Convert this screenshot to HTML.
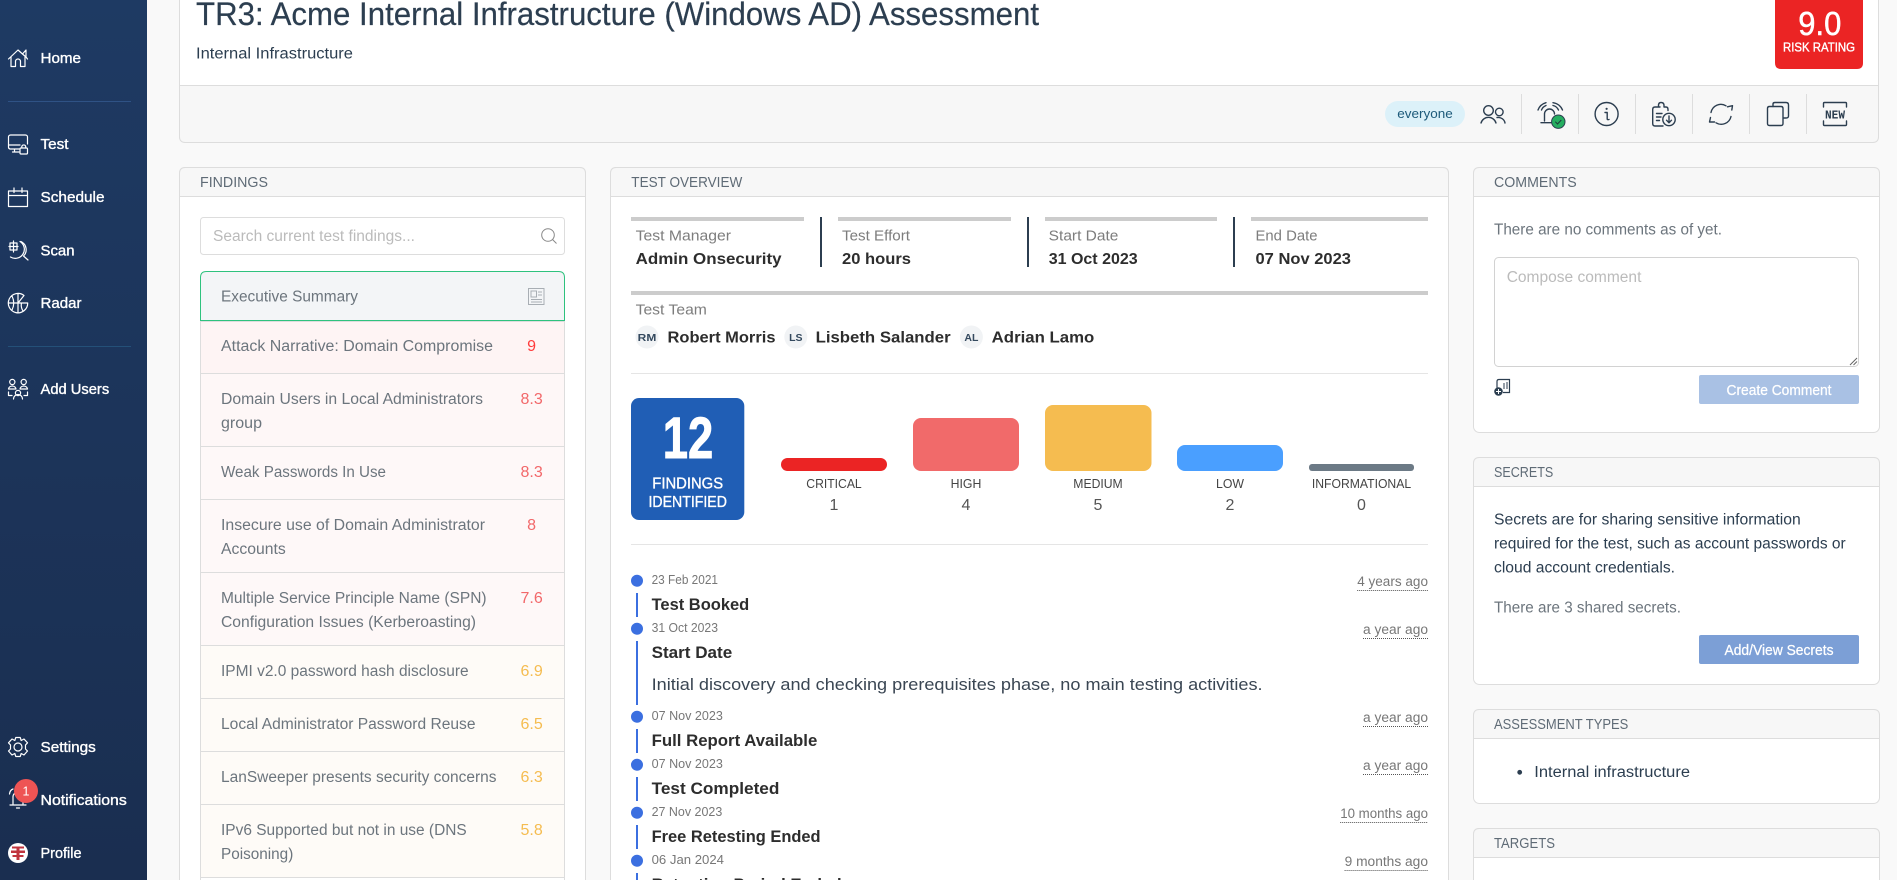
<!DOCTYPE html>
<html lang="en">
<head>
<meta charset="utf-8">
<title>TR3: Acme Internal Infrastructure (Windows AD) Assessment</title>
<style>
html,body{margin:0;padding:0;width:1897px;height:880px;overflow:hidden;background:#f9f9f9}
svg{display:block;font-family:"Liberation Sans",sans-serif;overflow:hidden}
.nav{fill:#fff;font-size:14.5px;stroke:#fff;stroke-width:.35}
.i{fill:none;stroke:#fff;stroke-width:1.2;stroke-linecap:round;stroke-linejoin:round}
.k{fill:none;stroke:#2c3e50;stroke-width:1.4;stroke-linecap:round;stroke-linejoin:round}
.h{fill:#5f6b76;font-size:14.5px}
.f{fill:#6c757d;font-size:15.5px}
.s{font-size:16px;text-anchor:middle}
.r1{fill:#ff3b3b}.r2{fill:#f2686a}.o{fill:#f5bc50}
.lab{fill:#7d7d7d;font-size:14.5px}
.val{fill:#2d2d2d;font-size:16px;font-weight:700}
.nm{fill:#2d2d2d;font-size:16px;font-weight:700}
.av{fill:#34495e;font-size:10.5px;text-anchor:middle;font-weight:700}
.bl{fill:#444;font-size:13px;text-anchor:middle}
.bc{fill:#555;font-size:16px;text-anchor:middle}
.d{fill:#777;font-size:13px}
.t{fill:#2d2d2d;font-size:16.5px;font-weight:700}
.a{fill:#777;font-size:13.5px;text-anchor:end}
.u{stroke:#555;stroke-width:1;stroke-dasharray:1 1}
.dot{fill:#3b6fe0}
.v{fill:#3b6fe0}
.b{fill:#2c3e50;font-size:15.5px}
.g{fill:#6c757d;font-size:15.5px}
.bt{fill:#fff;font-size:14.5px;text-anchor:middle;stroke:#fff;stroke-width:.25}
</style>
</head>
<body>
<svg width="1897" height="880" viewBox="0 0 1897 880" xmlns="http://www.w3.org/2000/svg">
<defs>
<linearGradient id="sb" x1="0" y1="0" x2="0" y2="1"><stop offset="0" stop-color="#1e3a63"/><stop offset="1" stop-color="#1a2e50"/></linearGradient>
</defs>
<rect width="1897" height="880" fill="#f9f9f9"/>

<!-- Sidebar -->
<rect width="147" height="880" fill="url(#sb)"/>
<rect x="8" y="101" width="123" height="1" fill="#2f5285"/>
<rect x="8" y="346" width="123" height="1" fill="#245078"/>
<text class="nav" x="40.5" y="63.2" textLength="40.5" lengthAdjust="spacingAndGlyphs">Home</text>
<text class="nav" x="40.5" y="149.2" textLength="28" lengthAdjust="spacingAndGlyphs">Test</text>
<text class="nav" x="40.5" y="202.2" textLength="64" lengthAdjust="spacingAndGlyphs">Schedule</text>
<text class="nav" x="40.5" y="255.4" textLength="34" lengthAdjust="spacingAndGlyphs">Scan</text>
<text class="nav" x="40.5" y="308.2" textLength="41" lengthAdjust="spacingAndGlyphs">Radar</text>
<text class="nav" x="40.5" y="394.2" textLength="68.7" lengthAdjust="spacingAndGlyphs">Add Users</text>
<text class="nav" x="40.5" y="752.2" textLength="55.3" lengthAdjust="spacingAndGlyphs">Settings</text>
<text class="nav" x="40.5" y="805.2" textLength="86.3" lengthAdjust="spacingAndGlyphs">Notifications</text>
<text class="nav" x="40.5" y="858.2" textLength="41" lengthAdjust="spacingAndGlyphs">Profile</text>

<!-- sidebar icons -->
<path class="i" d="M8.5 59 L18 50 L22.5 54 L26 50 V57 L27.5 59 M22.5 54 L26 57 M11 57 V66.5 H15.5 V61.5 A2.5 2.5 0 0 1 20.5 61.5 V66.5 H25 V57"/>
<path class="i" d="M19 149 H10 A2 2 0 0 1 8.5 147 V137 A2 2 0 0 1 10.5 135 H25.5 A2 2 0 0 1 27.5 137 V144 M8.5 145 H20 M14.5 149 V152 M12.5 152 H19"/>
<rect class="i" x="20" y="148" width="7.5" height="6" rx="1"/><path class="i" d="M21.8 148 V146.5 A2 2 0 0 1 25.7 146.5 V148"/>
<path class="i" d="M8.5 191 H27.5 V206.5 H8.5 Z M8.5 195.5 H27.5 M14 188 V192.5 M22 188 V192.5"/>
<path class="i" d="M20 241.5 A9 9 0 1 1 10.5 257 M21 241.5 A9 9 0 0 1 23.5 256 L28 260 M10 243 H17 V250 H10 Z M9 246.5 H18 M13.5 241 V252"/>
<path class="i" d="M24 295.5 A9.7 9.7 0 1 0 27.7 303 H18 L24 295.5 M8.5 303 H18 M18 293.5 V312.5 M12 296 Q15.5 303 12 310 M23 311 Q20.5 307 21.5 303"/>
<circle class="i" cx="12.3" cy="382" r="2.6"/><circle class="i" cx="23.7" cy="382" r="2.6"/>
<path class="i" d="M8.5 389 A3.8 3.5 0 0 1 16 389 Z M20 389 A3.8 3.5 0 0 1 27.5 389 Z M8.5 392 V395.5 H12 M27.5 392 V395.5 H24"/>
<circle class="i" cx="18" cy="393" r="2.6"/><path class="i" d="M13.5 399 A4.5 4.5 0 0 1 22.5 399"/>
<path class="i" d="M15.8 737.5 H20.2 L21.2 740.5 L24 739 L27.5 742.8 L25.5 745 L25.5 749 L27.5 751 L24 755 L21.2 753.5 L20.2 756.5 H15.8 L14.8 753.5 L12 755 L8.5 751 L10.5 749 L10.5 745 L8.5 742.8 L12 739 L14.8 740.5 Z"/>
<circle class="i" cx="18" cy="747" r="4"/>
<path class="i" d="M13 804 V797 A5 5 0 0 1 23 797 V804 M10 805 H26 M16.5 808 H19.5 M9.5 794 Q10 790 13 789"/>
<circle cx="26" cy="791" r="12" fill="#ee5454"/>
<text x="26" y="795.5" fill="#fff" font-size="12.5" text-anchor="middle">1</text>
<circle cx="18" cy="853" r="10" fill="#fff"/>
<path d="M12 846.5 H24 V848.5 H19.5 V850.5 H25 V853 H19.5 V855 H23.5 V857 H19.5 V860 H16.5 V857 H12.5 V855 H16.5 V853 H11 V850.5 H16.5 V848.5 H12 Z" fill="#c0353f"/>

<!-- Header card -->
<rect x="179.5" y="-10" width="1699" height="152.5" rx="6" fill="#fff" stroke="#ddd"/>
<path d="M179.5 85.5 H1878.5 V136.5 Q1878.5 142.5 1872.5 142.5 H185.5 Q179.5 142.5 179.5 136.5 Z" fill="#f7f7f7" stroke="#ddd"/>
<text x="196" y="25" fill="#2c3e50" font-size="32" stroke="#2c3e50" stroke-width=".2" textLength="843" lengthAdjust="spacingAndGlyphs">TR3: Acme Internal Infrastructure (Windows AD) Assessment</text>
<text x="196" y="58.7" fill="#2c3e50" font-size="15.5" textLength="157" lengthAdjust="spacingAndGlyphs">Internal Infrastructure</text>
<path d="M1775 0 H1863 V63 Q1863 69 1857 69 H1781 Q1775 69 1775 63 Z" fill="#eb2424"/>
<text x="1798.3" y="35" fill="#fff" font-size="33" stroke="#fff" stroke-width=".5" textLength="43" lengthAdjust="spacingAndGlyphs">9.0</text>
<text x="1783" y="51.7" fill="#fff" font-size="13" stroke="#fff" stroke-width=".35" textLength="72" lengthAdjust="spacingAndGlyphs">RISK RATING</text>

<!-- toolbar -->
<rect x="1521" y="94" width="1" height="40" fill="#ddd"/><rect x="1578" y="94" width="1" height="40" fill="#ddd"/><rect x="1635" y="94" width="1" height="40" fill="#ddd"/><rect x="1692" y="94" width="1" height="40" fill="#ddd"/><rect x="1749" y="94" width="1" height="40" fill="#ddd"/><rect x="1806" y="94" width="1" height="40" fill="#ddd"/>
<rect x="1385" y="101" width="80" height="26" rx="13" fill="#dcf1f9"/>
<text x="1397.3" y="118" fill="#1d5a7a" font-size="13" textLength="55.5" lengthAdjust="spacingAndGlyphs">everyone</text>
<circle class="k" cx="1488.5" cy="110.5" r="4.8"/><path class="k" d="M1481 123 A7.8 7.8 0 0 1 1496 123"/>
<circle class="k" cx="1499.3" cy="112" r="3.8"/><path class="k" d="M1497 117.5 A7 6.5 0 0 1 1505 123"/>
<path class="k" d="M1544.5 121 V114 A5 5 0 0 1 1554.5 114 M1541 122.7 H1552 M1541.5 110 A8 8 0 0 1 1546 105.5 M1538 110 A12 12 0 0 1 1546 102.7 M1553 105.5 A8 8 0 0 1 1558.5 110 M1553 102.7 A12 12 0 0 1 1562.5 110"/>
<circle cx="1558.3" cy="121.7" r="6.7" fill="#25ae60" stroke="#2c3e50" stroke-width="1"/><path d="M1555.3 121.7 L1557.5 124 L1561.3 120" fill="none" stroke="#1e3a3a" stroke-width="1"/>
<circle class="k" cx="1606.6" cy="114" r="11.5"/><path class="k" d="M1605 112.5 H1607.2 V119 Q1607.2 120 1609 119.5"/><circle cx="1606.6" cy="108.8" r="1.1" fill="#2c3e50"/>
<path class="k" d="M1660 107 H1655 Q1652.7 107 1652.7 109.5 V123.5 Q1652.7 126 1655 126 H1663 M1668 110.5 V109.5 Q1668 107 1666 107 H1664 V105.5 Q1664 102.5 1661 102.5 Q1658.5 102.5 1658.5 105.5 V107 M1656.5 113.5 H1662 M1656.5 117 H1661 M1656.5 120.5 H1659.5"/>
<circle class="k" cx="1669" cy="119.5" r="6.2"/><path class="k" d="M1669 116 V122.5 M1666.5 120.2 L1669 122.8 L1671.5 120.2"/>
<path class="k" d="M1711 112.5 A10 10 0 0 1 1726 105.8 M1731 116.5 A10 10 0 0 1 1716 122.8 M1727.5 106.8 L1732.5 105.7 L1731.8 110 M1714.5 122 L1709.5 122 L1710.5 117.5"/>
<path class="k" d="M1773 106.5 V104 Q1773 102.5 1775 102.5 H1786 Q1788.5 102.5 1788.5 105 V116 Q1788.5 118 1786 118 H1783.5"/>
<path class="k" d="M1769.5 106.5 H1781 Q1783 106.5 1783 108.5 V123.5 Q1783 125.5 1781 125.5 H1769.5 Q1767.5 125.5 1767.5 123.5 V108.5 Q1767.5 106.5 1769.5 106.5 Z"/>
<path class="k" d="M1823.5 107 V103.5 Q1823.5 102.5 1824.5 102.5 H1845.5 Q1846.5 102.5 1846.5 103.5 V107 M1823.5 121 V124.5 Q1823.5 125.5 1824.5 125.5 H1845.5 Q1846.5 125.5 1846.5 124.5 V121"/>
<text x="1825" y="118.5" fill="#2c3e50" font-size="11.5" font-weight="700" style="font-family:'Liberation Mono',monospace" textLength="20" lengthAdjust="spacingAndGlyphs">NEW</text>

<!-- Findings card -->
<path d="M179.5 880 V173.5 Q179.5 167.5 185.5 167.5 H579.5 Q585.5 167.5 585.5 173.5 V880" fill="#fff" stroke="#ddd"/>
<path d="M179.5 196.5 V173.5 Q179.5 167.5 185.5 167.5 H579.5 Q585.5 167.5 585.5 173.5 V196.5 Z" fill="#f7f7f7" stroke="#ddd"/>
<text class="h" x="200" y="187" textLength="68" lengthAdjust="spacingAndGlyphs">FINDINGS</text>
<rect x="200.5" y="217.5" width="364" height="37" rx="3" fill="#fff" stroke="#ddd"/>
<text x="213" y="241" fill="#bbb" font-size="15.5" textLength="202" lengthAdjust="spacingAndGlyphs">Search current test findings...</text>
<circle cx="548" cy="235" r="6.3" fill="none" stroke="#888" stroke-width="1"/><path d="M552.5 239.5 L556.5 243.5" stroke="#888" fill="none"/>

<rect x="200.5" y="321.5" width="364" height="52" fill="#fef4f4" stroke="#ddd"/>
<rect x="200.5" y="373.5" width="364" height="73" fill="#fef7f7" stroke="#ddd"/>
<rect x="200.5" y="446.5" width="364" height="53" fill="#fef8f8" stroke="#ddd"/>
<rect x="200.5" y="499.5" width="364" height="73" fill="#fef8f8" stroke="#ddd"/>
<rect x="200.5" y="572.5" width="364" height="73" fill="#fef8f8" stroke="#ddd"/>
<rect x="200.5" y="645.5" width="364" height="53" fill="#fefbf7" stroke="#ddd"/>
<rect x="200.5" y="698.5" width="364" height="53" fill="#fefbf7" stroke="#ddd"/>
<rect x="200.5" y="751.5" width="364" height="53" fill="#fefbf7" stroke="#ddd"/>
<rect x="200.5" y="804.5" width="364" height="73" fill="#fefbf7" stroke="#ddd"/>
<path d="M200.5 880 V877.5 H564.5 V880" fill="#fff" stroke="#ddd"/>
<path d="M200.5 320.5 V277.5 Q200.5 271.5 206.5 271.5 H558.5 Q564.5 271.5 564.5 277.5 V320.5 Z" fill="#f3f5f7" stroke="#2ec27e"/>
<text class="f" x="221" y="301.7" textLength="137" lengthAdjust="spacingAndGlyphs">Executive Summary</text>
<path d="M528.5 288.5 H544 V304.5 H528.5 Z M531 291 H536.5 V297 H531 Z M538 292 H542 M538 295 H542 M531 299.5 H542 M531 302 H542" fill="none" stroke="#a8aeb4" stroke-width="1"/>
<text class="f" x="221" y="351" textLength="272" lengthAdjust="spacingAndGlyphs">Attack Narrative: Domain Compromise</text><text class="s r1" x="531.6" y="351">9</text>
<text class="f" x="221" y="404" textLength="262" lengthAdjust="spacingAndGlyphs">Domain Users in Local Administrators</text><text class="f" x="221" y="428" textLength="41" lengthAdjust="spacingAndGlyphs">group</text><text class="s r2" x="531.6" y="404">8.3</text>
<text class="f" x="221" y="477" textLength="165" lengthAdjust="spacingAndGlyphs">Weak Passwords In Use</text><text class="s r2" x="531.6" y="477">8.3</text>
<text class="f" x="221" y="530" textLength="264" lengthAdjust="spacingAndGlyphs">Insecure use of Domain Administrator</text><text class="f" x="221" y="554" textLength="64.7" lengthAdjust="spacingAndGlyphs">Accounts</text><text class="s r2" x="531.6" y="530">8</text>
<text class="f" x="221" y="603" textLength="265.6" lengthAdjust="spacingAndGlyphs">Multiple Service Principle Name (SPN)</text><text class="f" x="221" y="627" textLength="255" lengthAdjust="spacingAndGlyphs">Configuration Issues (Kerberoasting)</text><text class="s r2" x="531.6" y="603">7.6</text>
<text class="f" x="221" y="676" textLength="247.6" lengthAdjust="spacingAndGlyphs">IPMI v2.0 password hash disclosure</text><text class="s o" x="531.6" y="676">6.9</text>
<text class="f" x="221" y="729" textLength="254.5" lengthAdjust="spacingAndGlyphs">Local Administrator Password Reuse</text><text class="s o" x="531.6" y="729">6.5</text>
<text class="f" x="221" y="782" textLength="275.5" lengthAdjust="spacingAndGlyphs">LanSweeper presents security concerns</text><text class="s o" x="531.6" y="782">6.3</text>
<text class="f" x="221" y="835" textLength="245.7" lengthAdjust="spacingAndGlyphs">IPv6 Supported but not in use (DNS</text><text class="f" x="221" y="859" textLength="72.3" lengthAdjust="spacingAndGlyphs">Poisoning)</text><text class="s o" x="531.6" y="835">5.8</text>

<!-- Test overview -->
<path d="M610.5 880 V173.5 Q610.5 167.5 616.5 167.5 H1442.5 Q1448.5 167.5 1448.5 173.5 V880" fill="#fff" stroke="#ddd"/>
<path d="M610.5 196.5 V173.5 Q610.5 167.5 616.5 167.5 H1442.5 Q1448.5 167.5 1448.5 173.5 V196.5 Z" fill="#f7f7f7" stroke="#ddd"/>
<text class="h" x="631.3" y="187" textLength="111" lengthAdjust="spacingAndGlyphs">TEST OVERVIEW</text>
<rect x="631" y="217" width="173" height="4" fill="#ccc"/><rect x="838" y="217" width="173" height="4" fill="#ccc"/><rect x="1045" y="217" width="172" height="4" fill="#ccc"/><rect x="1251" y="217" width="177" height="4" fill="#ccc"/>
<rect x="820" y="217" width="2" height="50" fill="#2c3e50"/><rect x="1027" y="217" width="2" height="50" fill="#2c3e50"/><rect x="1233" y="217" width="2" height="50" fill="#2c3e50"/>
<text class="lab" x="635.6" y="240.7" textLength="95.4" lengthAdjust="spacingAndGlyphs">Test Manager</text>
<text class="lab" x="842" y="240.7" textLength="68" lengthAdjust="spacingAndGlyphs">Test Effort</text>
<text class="lab" x="1048.7" y="240.7" textLength="69.7" lengthAdjust="spacingAndGlyphs">Start Date</text>
<text class="lab" x="1255.5" y="240.7" textLength="62" lengthAdjust="spacingAndGlyphs">End Date</text>
<text class="val" x="635.6" y="264" textLength="146" lengthAdjust="spacingAndGlyphs">Admin Onsecurity</text>
<text class="val" x="842" y="264" textLength="69" lengthAdjust="spacingAndGlyphs">20 hours</text>
<text class="val" x="1048.7" y="264" textLength="89" lengthAdjust="spacingAndGlyphs">31 Oct 2023</text>
<text class="val" x="1255.5" y="264" textLength="95.5" lengthAdjust="spacingAndGlyphs">07 Nov 2023</text>
<rect x="631" y="291" width="797" height="4" fill="#ccc"/>
<text class="lab" x="635.6" y="314.7" textLength="71.3" lengthAdjust="spacingAndGlyphs">Test Team</text>
<circle cx="647" cy="337" r="11.5" fill="#f1f3f5"/><text class="av" x="647" y="341" textLength="18.6" lengthAdjust="spacingAndGlyphs">RM</text>
<text class="nm" x="667.5" y="342.3" textLength="108" lengthAdjust="spacingAndGlyphs">Robert Morris</text>
<circle cx="795.8" cy="337" r="11.5" fill="#f1f3f5"/><text class="av" x="795.8" y="341">LS</text>
<text class="nm" x="815.6" y="342.3" textLength="135" lengthAdjust="spacingAndGlyphs">Lisbeth Salander</text>
<circle cx="971.4" cy="337" r="11.5" fill="#f1f3f5"/><text class="av" x="971.4" y="341">AL</text>
<text class="nm" x="991.7" y="342.3" textLength="102.6" lengthAdjust="spacingAndGlyphs">Adrian Lamo</text>
<rect x="631" y="373" width="797" height="1" fill="#e5e5e5"/>
<rect x="631" y="398" width="113.3" height="122" rx="8" fill="#205eb5"/>
<text x="662.7" y="458" fill="#fff" font-size="58" font-weight="700" stroke="#fff" stroke-width="1" textLength="50.5" lengthAdjust="spacingAndGlyphs">12</text>
<text x="652.3" y="488.3" fill="#fff" font-size="15.5" stroke="#fff" stroke-width=".35" textLength="70.8" lengthAdjust="spacingAndGlyphs">FINDINGS</text>
<text x="648.5" y="507" fill="#fff" font-size="15.5" stroke="#fff" stroke-width=".35" textLength="78.4" lengthAdjust="spacingAndGlyphs">IDENTIFIED</text>
<rect x="781" y="458" width="106" height="13" rx="6.5" fill="#eb2424"/>
<rect x="913" y="418" width="106" height="53" rx="8" fill="#f16a6a"/>
<rect x="1045" y="405" width="106.5" height="66" rx="8" fill="#f5bc50"/>
<rect x="1177" y="445" width="106" height="26" rx="8" fill="#4a9fff"/>
<rect x="1309" y="464" width="105" height="7" rx="3" fill="#6c7a86"/>
<text class="bl" x="834" y="488" textLength="55.4" lengthAdjust="spacingAndGlyphs">CRITICAL</text>
<text class="bl" x="966" y="488" textLength="30.7" lengthAdjust="spacingAndGlyphs">HIGH</text>
<text class="bl" x="1098" y="488" textLength="49.4" lengthAdjust="spacingAndGlyphs">MEDIUM</text>
<text class="bl" x="1230" y="488" textLength="28" lengthAdjust="spacingAndGlyphs">LOW</text>
<text class="bl" x="1361.5" y="488" textLength="99.3" lengthAdjust="spacingAndGlyphs">INFORMATIONAL</text>
<text class="bc" x="834" y="510">1</text><text class="bc" x="966" y="510">4</text><text class="bc" x="1098" y="510">5</text><text class="bc" x="1230" y="510">2</text><text class="bc" x="1361.5" y="510">0</text>
<rect x="631" y="544" width="797" height="1" fill="#e5e5e5"/>

<!-- Timeline -->
<circle class="dot" cx="637" cy="580.7" r="6"/><rect class="v" x="636" y="593" width="2" height="24"/>
<text class="d" x="651.6" y="584" textLength="66.4" lengthAdjust="spacingAndGlyphs">23 Feb 2021</text>
<text class="t" x="651.6" y="610" textLength="97.6" lengthAdjust="spacingAndGlyphs">Test Booked</text>
<text class="a" x="1428" y="586" textLength="70.8" lengthAdjust="spacingAndGlyphs">4 years ago</text><line class="u" x1="1357.2" x2="1428" y1="590.5" y2="590.5"/>

<circle class="dot" cx="637" cy="628.7" r="6"/><rect class="v" x="636" y="641" width="2" height="64"/>
<text class="d" x="651.6" y="632" textLength="66.4" lengthAdjust="spacingAndGlyphs">31 Oct 2023</text>
<text class="t" x="651.6" y="658" textLength="80.6" lengthAdjust="spacingAndGlyphs">Start Date</text>
<text x="651.6" y="690" fill="#3a4653" font-size="16.5" textLength="611" lengthAdjust="spacingAndGlyphs">Initial discovery and checking prerequisites phase, no main testing activities.</text>
<text class="a" x="1428" y="634" textLength="65" lengthAdjust="spacingAndGlyphs">a year ago</text><line class="u" x1="1363" x2="1428" y1="638.5" y2="638.5"/>

<circle class="dot" cx="637" cy="716.7" r="6"/><rect class="v" x="636" y="729" width="2" height="24"/>
<text class="d" x="651.6" y="720" textLength="71.3" lengthAdjust="spacingAndGlyphs">07 Nov 2023</text>
<text class="t" x="651.6" y="746" textLength="165.7" lengthAdjust="spacingAndGlyphs">Full Report Available</text>
<text class="a" x="1428" y="722" textLength="65" lengthAdjust="spacingAndGlyphs">a year ago</text><line class="u" x1="1363" x2="1428" y1="726.5" y2="726.5"/>

<circle class="dot" cx="637" cy="764.7" r="6"/><rect class="v" x="636" y="777" width="2" height="24"/>
<text class="d" x="651.6" y="768" textLength="71.3" lengthAdjust="spacingAndGlyphs">07 Nov 2023</text>
<text class="t" x="651.6" y="794" textLength="127.8" lengthAdjust="spacingAndGlyphs">Test Completed</text>
<text class="a" x="1428" y="770" textLength="65" lengthAdjust="spacingAndGlyphs">a year ago</text><line class="u" x1="1363" x2="1428" y1="774.5" y2="774.5"/>

<circle class="dot" cx="637" cy="812.7" r="6"/><rect class="v" x="636" y="825" width="2" height="24"/>
<text class="d" x="651.6" y="816" textLength="70.7" lengthAdjust="spacingAndGlyphs">27 Nov 2023</text>
<text class="t" x="651.6" y="842" textLength="169" lengthAdjust="spacingAndGlyphs">Free Retesting Ended</text>
<text class="a" x="1428" y="818" textLength="87.8" lengthAdjust="spacingAndGlyphs">10 months ago</text><line class="u" x1="1340.2" x2="1428" y1="822.5" y2="822.5"/>

<circle class="dot" cx="637" cy="860.7" r="6"/><rect class="v" x="636" y="873" width="2" height="7"/>
<text class="d" x="651.6" y="864" textLength="72.4" lengthAdjust="spacingAndGlyphs">06 Jan 2024</text>
<text class="t" x="651.6" y="890" textLength="190" lengthAdjust="spacingAndGlyphs">Retention Period Ended</text>
<text class="a" x="1428" y="866" textLength="83.4" lengthAdjust="spacingAndGlyphs">9 months ago</text><line class="u" x1="1344.6" x2="1428" y1="870.5" y2="870.5"/>

<!-- Comments -->
<rect x="1473.5" y="167.5" width="406" height="265" rx="6" fill="#fff" stroke="#ddd"/>
<path d="M1473.5 196.5 V173.5 Q1473.5 167.5 1479.5 167.5 H1873.5 Q1879.5 167.5 1879.5 173.5 V196.5 Z" fill="#f7f7f7" stroke="#ddd"/>
<text class="h" x="1494" y="187" textLength="82.7" lengthAdjust="spacingAndGlyphs">COMMENTS</text>
<text class="g" x="1494" y="234.7" textLength="228" lengthAdjust="spacingAndGlyphs">There are no comments as of yet.</text>
<rect x="1494.5" y="257.5" width="364" height="109" rx="4" fill="#fff" stroke="#d2d2d2"/>
<text x="1506.7" y="282" fill="#bbb" font-size="15.5" textLength="134.7" lengthAdjust="spacingAndGlyphs">Compose comment</text>
<path d="M1850 365 L1857 358 M1853.5 365 L1857 361.5" stroke="#666" stroke-width="1" fill="none"/>
<path d="M1497 388 V381.5 Q1497 379.5 1499 379.5 H1509.5 V392.5 H1503" fill="none" stroke="#2c3e50" stroke-width="1.2"/><path d="M1504 383 V389 M1507 382 V389" stroke="#2c3e50" fill="none"/>
<circle cx="1498.5" cy="391.5" r="4.3" fill="#2c3e50"/><path d="M1498.5 389 V394 M1496 391.5 H1501" stroke="#fff" fill="none"/>
<rect x="1699" y="375" width="160" height="29" rx="2" fill="#a9c1e4"/>
<text class="bt" x="1779" y="395" textLength="105" lengthAdjust="spacingAndGlyphs">Create Comment</text>

<!-- Secrets -->
<rect x="1473.5" y="457.5" width="406" height="227" rx="6" fill="#fff" stroke="#ddd"/>
<path d="M1473.5 486.5 V463.5 Q1473.5 457.5 1479.5 457.5 H1873.5 Q1879.5 457.5 1879.5 463.5 V486.5 Z" fill="#f7f7f7" stroke="#ddd"/>
<text class="h" x="1494" y="477" textLength="59.3" lengthAdjust="spacingAndGlyphs">SECRETS</text>
<text class="b" x="1494" y="524.7" textLength="306.7" lengthAdjust="spacingAndGlyphs">Secrets are for sharing sensitive information</text>
<text class="b" x="1494" y="548.7" textLength="351.7" lengthAdjust="spacingAndGlyphs">required for the test, such as account passwords or</text>
<text class="b" x="1494" y="572.7" textLength="181" lengthAdjust="spacingAndGlyphs">cloud account credentials.</text>
<text class="g" x="1494" y="612.7" textLength="187" lengthAdjust="spacingAndGlyphs">There are 3 shared secrets.</text>
<rect x="1699" y="635" width="160" height="29" rx="2" fill="#7c9fd6"/>
<text class="bt" x="1779" y="655" textLength="109" lengthAdjust="spacingAndGlyphs">Add/View Secrets</text>

<!-- Assessment types -->
<rect x="1473.5" y="709.5" width="406" height="94" rx="6" fill="#fff" stroke="#ddd"/>
<path d="M1473.5 738.5 V715.5 Q1473.5 709.5 1479.5 709.5 H1873.5 Q1879.5 709.5 1879.5 715.5 V738.5 Z" fill="#f7f7f7" stroke="#ddd"/>
<text class="h" x="1494" y="729" textLength="134.3" lengthAdjust="spacingAndGlyphs">ASSESSMENT TYPES</text>
<circle cx="1519.7" cy="772.3" r="2.4" fill="#2c3e50"/>
<text class="b" x="1534.3" y="777" textLength="155.7" lengthAdjust="spacingAndGlyphs">Internal infrastructure</text>

<!-- Targets -->
<path d="M1473.5 880 V834.5 Q1473.5 828.5 1479.5 828.5 H1873.5 Q1879.5 828.5 1879.5 834.5 V880" fill="#fff" stroke="#ddd"/>
<path d="M1473.5 857.5 V834.5 Q1473.5 828.5 1479.5 828.5 H1873.5 Q1879.5 828.5 1879.5 834.5 V857.5 Z" fill="#f7f7f7" stroke="#ddd"/>
<text class="h" x="1494" y="848" textLength="61" lengthAdjust="spacingAndGlyphs">TARGETS</text>
</svg>
</body>
</html>
